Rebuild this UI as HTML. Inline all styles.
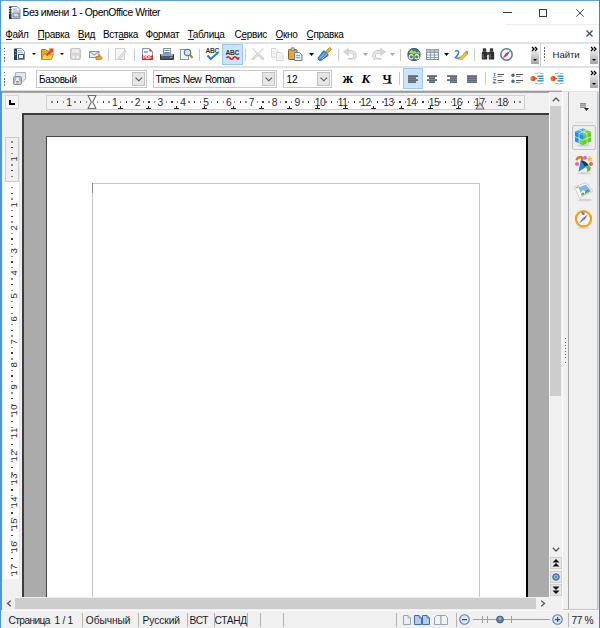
<!DOCTYPE html><html><head><meta charset="utf-8"><style>
html,body{margin:0;padding:0}
body{width:600px;height:628px;position:relative;overflow:hidden;background:#fff;font-family:"Liberation Sans",sans-serif}
.t{position:absolute;white-space:pre;line-height:normal}
.r{position:absolute}
</style></head><body>

<div class="r" style="left:0px;top:0px;width:600px;height:25px;background:#fff;"></div>
<svg class="r" style="left:9px;top:6px" width="12" height="13" viewBox="0 0 12 13"><path d="M1.5 0.5h6.5l3 3v9h-9.5z" fill="#f6f8fa" stroke="#7d8b99"/><rect x="0" y="0.5" width="2.5" height="1.5" fill="#1e2e40"/><rect x="0" y="3" width="2.5" height="1.5" fill="#1e2e40"/><rect x="0" y="5.5" width="2.5" height="1.5" fill="#1e2e40"/><rect x="0" y="7.5" width="2.5" height="5.5" fill="#1e2e40"/><rect x="4" y="2.5" width="4" height="1" fill="#9aaab8"/><rect x="4" y="4.5" width="6" height="1" fill="#9aaab8"/><rect x="4" y="7" width="6" height="4" fill="#cfdceb" stroke="#4a6080" stroke-width="0.8"/></svg>
<div class="t" style="left:22.5px;top:7px;font-size:10.4px;color:#000;letter-spacing:-0.43px;font-weight:400;">Без имени 1 - OpenOffice Writer</div>
<div class="r" style="left:503px;top:12px;width:9px;height:1px;background:#3a3a3a;"></div>
<div class="r" style="left:539px;top:9px;width:6px;height:6px;border:1px solid #3a3a3a"></div>
<svg class="r" style="left:576px;top:9px" width="8" height="8" viewBox="0 0 8 8"><path d="M0.3 0.3L7.7 7.7M7.7 0.3L0.3 7.7" stroke="#333" stroke-width="0.9"/></svg>
<div class="r" style="left:505px;top:24px;width:94px;height:1px;background:#ececec;"></div>
<div class="t" style="left:5.2px;top:28.5px;font-size:10px;color:#000;letter-spacing:-0.3px;font-weight:400;">Файл</div>
<div class="t" style="left:37.5px;top:28.5px;font-size:10px;color:#000;letter-spacing:-0.3px;font-weight:400;">Правка</div>
<div class="t" style="left:77.8px;top:28.5px;font-size:10px;color:#000;letter-spacing:-0.3px;font-weight:400;">Вид</div>
<div class="t" style="left:103px;top:28.5px;font-size:10px;color:#000;letter-spacing:-0.3px;font-weight:400;">Вставка</div>
<div class="t" style="left:145.5px;top:28.5px;font-size:10px;color:#000;letter-spacing:-0.3px;font-weight:400;">Формат</div>
<div class="t" style="left:187.5px;top:28.5px;font-size:10px;color:#000;letter-spacing:-0.3px;font-weight:400;">Таблица</div>
<div class="t" style="left:234.5px;top:28.5px;font-size:10px;color:#000;letter-spacing:-0.3px;font-weight:400;">Сервис</div>
<div class="t" style="left:275.5px;top:28.5px;font-size:10px;color:#000;letter-spacing:-0.3px;font-weight:400;">Окно</div>
<div class="t" style="left:306.5px;top:28.5px;font-size:10px;color:#000;letter-spacing:-0.3px;font-weight:400;">Справка</div>
<div class="r" style="left:6px;top:39px;width:6px;height:1px;background:#2a2a2a;"></div>
<div class="r" style="left:38px;top:39px;width:6px;height:1px;background:#2a2a2a;"></div>
<div class="r" style="left:78.5px;top:39px;width:6px;height:1px;background:#2a2a2a;"></div>
<div class="r" style="left:119px;top:39px;width:5px;height:1px;background:#2a2a2a;"></div>
<div class="r" style="left:153.5px;top:39px;width:5px;height:1px;background:#2a2a2a;"></div>
<div class="r" style="left:188px;top:39px;width:6px;height:1px;background:#2a2a2a;"></div>
<div class="r" style="left:241px;top:39px;width:5px;height:1px;background:#2a2a2a;"></div>
<div class="r" style="left:276px;top:39px;width:7px;height:1px;background:#2a2a2a;"></div>
<div class="r" style="left:307px;top:39px;width:6px;height:1px;background:#2a2a2a;"></div>
<svg class="r" style="left:586px;top:30px" width="7" height="7" viewBox="0 0 7 7"><path d="M0.5 0.5L6.5 6.5M6.5 0.5L0.5 6.5" stroke="#3e5468" stroke-width="1.4"/></svg>
<div class="r" style="left:0px;top:42px;width:599px;height:1.6px;background:#e2e2e2;"></div>
<div class="r" style="left:0px;top:66px;width:599px;height:1.6px;background:#e2e2e2;"></div>
<div class="r" style="left:0px;top:90px;width:562px;height:1px;background:#dcdcdc;"></div>
<div class="r" style="left:0px;top:91px;width:562px;height:1.6px;background:#9c9c9c;"></div>
<div class="r" style="left:562px;top:91px;width:37px;height:1px;background:#e4e4e4;"></div>
<div class="r" style="left:3.8px;top:47.6px;width:1.5px;height:1.5px;background:#6a6a6a;"></div>
<div class="r" style="left:3.8px;top:50.75px;width:1.5px;height:1.5px;background:#6a6a6a;"></div>
<div class="r" style="left:3.8px;top:53.9px;width:1.5px;height:1.5px;background:#6a6a6a;"></div>
<div class="r" style="left:3.8px;top:57.05px;width:1.5px;height:1.5px;background:#6a6a6a;"></div>
<div class="r" style="left:3.8px;top:60.2px;width:1.5px;height:1.5px;background:#6a6a6a;"></div>
<div class="r" style="left:3.8px;top:71.7px;width:1.5px;height:1.5px;background:#6a6a6a;"></div>
<div class="r" style="left:3.8px;top:74.85000000000001px;width:1.5px;height:1.5px;background:#6a6a6a;"></div>
<div class="r" style="left:3.8px;top:78.0px;width:1.5px;height:1.5px;background:#6a6a6a;"></div>
<div class="r" style="left:3.8px;top:81.15px;width:1.5px;height:1.5px;background:#6a6a6a;"></div>
<div class="r" style="left:3.8px;top:84.3px;width:1.5px;height:1.5px;background:#6a6a6a;"></div>
<svg class="r" style="left:14px;top:48px" width="11" height="12" viewBox="0 0 11 12"><path d="M0.5 0.5h7l3 3v8h-10z" fill="#eef3f8" stroke="#8494a5"/><rect x="4" y="2" width="3.5" height="1" fill="#9bbbd8"/><rect x="4" y="4" width="5" height="1" fill="#9bbbd8"/><rect x="0" y="1" width="3" height="11" fill="#2a3f58"/><rect x="1" y="3" width="1" height="1" fill="#8aa"/><rect x="1" y="6" width="1" height="1" fill="#8aa"/><rect x="4.5" y="6.5" width="5" height="4" fill="#fff" stroke="#3a5676"/></svg>
<svg class="r" style="left:31.5px;top:53px" width="4" height="2" viewBox="0 0 4 2"><path d="M0 0h4l-2 2z" fill="#000"/></svg>
<svg class="r" style="left:41px;top:48px" width="13" height="12" viewBox="0 0 13 12"><path d="M0.5 1.5h4l1.5 1.5h4v8.5h-9.5z" fill="#eaa82e" stroke="#b8780f"/><path d="M0.5 11.5l2-5.5h10l-2 5.5z" fill="#fcd24a" stroke="#c08818" stroke-width="0.9"/><path d="M5.5 7.5l5-5" stroke="#e0461c" stroke-width="2.2"/><path d="M7.5 0.5h5v5z" fill="#e0461c"/></svg>
<svg class="r" style="left:59.5px;top:53px" width="4" height="2" viewBox="0 0 4 2"><path d="M0 0h4l-2 2z" fill="#000"/></svg>
<svg class="r" style="left:70px;top:48px" width="11" height="12" viewBox="0 0 11 12"><rect x="0.5" y="0.5" width="10" height="11" rx="1.5" fill="#d4d4d4" stroke="#c4c4c4"/><rect x="2" y="1" width="7" height="4" fill="#ececec"/><rect x="2.5" y="7.5" width="2" height="3" fill="#f4f4f4"/><rect x="6.5" y="7.5" width="2" height="3" fill="#f4f4f4"/></svg>
<svg class="r" style="left:88px;top:50px" width="15" height="10" viewBox="0 0 15 10"><rect x="1.5" y="1.5" width="9.5" height="6" fill="#e6ebf1" stroke="#8494a6"/><path d="M1.5 1.5l4.75 3.5 4.75-3.5" stroke="#8494a6" fill="none"/><path d="M8 6.5h3v-2l3.5 3.5-3.5 3.5v-2h-3z" fill="#f0a020" stroke="#b8700a" stroke-width="0.7"/></svg>
<div class="r" style="left:108px;top:49px;width:1px;height:12px;background:#c8c8c8;"></div>
<svg class="r" style="left:115px;top:48px" width="12" height="12" viewBox="0 0 12 12"><rect x="0.5" y="0.5" width="9" height="11" fill="#f6f6f6" stroke="#d0d0d0"/><path d="M4 9l6-7 1.5 1.5-6 7-2 .5z" fill="#e6e6e6" stroke="#c8c8c8" stroke-width="0.8"/></svg>
<div class="r" style="left:134px;top:49px;width:1px;height:12px;background:#c8c8c8;"></div>
<svg class="r" style="left:142px;top:48px" width="11" height="12" viewBox="0 0 11 12"><path d="M0.5 0.5h7l3 3v8h-10z" fill="#f2f5f8" stroke="#8a97a5"/><rect x="2" y="3" width="4" height="2" fill="#9ab8d6"/><path d="M7.5 0.5l3 3h-3z" fill="#d8262c"/><rect x="0" y="7" width="11" height="5" fill="#d9262c"/><text x="5.5" y="11.3" font-size="4.6" font-family="Liberation Sans" font-weight="700" text-anchor="middle" fill="#fff">PDF</text></svg>
<svg class="r" style="left:160px;top:48px" width="14" height="12" viewBox="0 0 14 12"><rect x="3.5" y="0.5" width="7" height="5" fill="#fff" stroke="#8192a3"/><rect x="4.5" y="2" width="5" height="1" fill="#5d8fc4"/><rect x="4.5" y="4" width="5" height="1" fill="#5d8fc4"/><path d="M0.5 6.5h13v5h-13z" fill="#505a63" stroke="#30363c"/><rect x="1" y="6" width="12" height="2" fill="#9aa3ab"/><rect x="10" y="9" width="2" height="1" fill="#6fcf4a"/></svg>
<svg class="r" style="left:180px;top:48px" width="13" height="12" viewBox="0 0 13 12"><rect x="0.5" y="1.5" width="8" height="10" fill="#f3f6f9" stroke="#8796a5"/><circle cx="7.5" cy="4.5" r="3.2" fill="#cfe3f3" stroke="#4d6f8e" stroke-width="1.1"/><path d="M9.8 6.8l2.8 3" stroke="#b07a20" stroke-width="2"/></svg>
<div class="r" style="left:199px;top:49px;width:1px;height:12px;background:#c8c8c8;"></div>
<svg class="r" style="left:205px;top:47px" width="15" height="14" viewBox="0 0 15 14"><text x="7.3" y="6" font-size="6.6" font-family="Liberation Sans" font-weight="700" text-anchor="middle" fill="#27384a" letter-spacing="-0.3">ABC</text><path d="M2.5 8.5l3.2 3.5 7.5-6.5" stroke="#2f7fd0" stroke-width="2.1" fill="none"/></svg>
<div class="r" style="left:222px;top:44px;width:19px;height:19px;background:#cce4f7;border:1px solid #99c9ef"></div>
<svg class="r" style="left:225px;top:49px" width="15" height="11" viewBox="0 0 15 11"><text x="7.3" y="5.8" font-size="6.6" font-family="Liberation Sans" font-weight="700" text-anchor="middle" fill="#27384a" letter-spacing="-0.3">ABC</text><path d="M1.5 9q1.7-2.5 3.4 0t3.4 0 3.4 0 2-0.8" stroke="#e0201a" stroke-width="1.7" fill="none"/></svg>
<div class="r" style="left:245px;top:49px;width:1px;height:12px;background:#c8c8c8;"></div>
<svg class="r" style="left:251px;top:48px" width="14" height="12" viewBox="0 0 14 12"><path d="M1.5 0.5L7 6M12.5 0.5L7 6" stroke="#d8d8d8" stroke-width="1.4"/><path d="M7 6L2 11M7 6L12 11" stroke="#cfcfcf" stroke-width="2.6" stroke-linecap="round"/><path d="M7 6L2 11M7 6L12 11" stroke="#e6e6e6" stroke-width="1"/></svg>
<svg class="r" style="left:271px;top:48px" width="13" height="13" viewBox="0 0 13 13"><path d="M0.5 0.5h4.5l2 2v6.5h-6.5z" fill="#f6f6f6" stroke="#d6d6d6"/><path d="M5.5 4.5h4.5l2 2v6h-6.5z" fill="#f6f6f6" stroke="#d6d6d6"/><path d="M2 3.5h3M2 5.5h3M7 8h3M7 10h3" stroke="#e2e2e2" stroke-width="0.8"/></svg>
<svg class="r" style="left:288px;top:47px" width="15" height="14" viewBox="0 0 15 14"><rect x="0.5" y="2.5" width="8.5" height="10" rx="0.8" fill="#e8a82a" stroke="#8a5e14"/><path d="M3 3.5v-1.5q0-1.5 1.7-1.5t1.7 1.5v1.5z" fill="#b8c0c8" stroke="#6d7884" stroke-width="0.8"/><path d="M6.5 5.5h5l2.5 2.5v5.5h-7.5z" fill="#dfeaf5" stroke="#6f8194"/><path d="M8 8.5h4M8 10.5h4" stroke="#7aa0c8" stroke-width="0.9"/></svg>
<svg class="r" style="left:309px;top:53px" width="5" height="3" viewBox="0 0 5 3"><path d="M0 0h5l-2.5 3z" fill="#000"/></svg>
<svg class="r" style="left:317px;top:47px" width="15" height="14" viewBox="0 0 15 14"><path d="M1.2 10.8L6.2 4.2Q7 3.4 7.8 4.2L10.8 7.2Q11.6 8 10.8 8.8L4.2 13.2Q2.6 14 1.6 13Q0.6 12 1.2 10.8z" fill="#4a8fe0" stroke="#1f58a6" stroke-width="0.9"/><path d="M3 11l4.5-5M5 12.2l4.5-5" stroke="#a8d0f4" stroke-width="0.8"/><path d="M8.6 4.2l4.2-3.8 1.8 1.8-3.8 4.2z" fill="#e8b52e" stroke="#a37712" stroke-width="0.7"/></svg>
<div class="r" style="left:338px;top:49px;width:1px;height:12px;background:#c8c8c8;"></div>
<svg class="r" style="left:343px;top:48px" width="14" height="12" viewBox="0 0 14 12"><path d="M4.5 3.8h3.5a4 4 0 0 1 0 8h-3" stroke="#c9c9c9" stroke-width="3.4" fill="none"/><path d="M4.5 3.8h3.5a4 4 0 0 1 0 8h-3" stroke="#e9e9e9" stroke-width="1.8" fill="none"/><path d="M0.3 3.8l5-3.6v7.2z" fill="#d8d8d8" stroke="#c6c6c6" stroke-width="0.6"/></svg>
<svg class="r" style="left:363px;top:53px" width="5" height="3" viewBox="0 0 5 3"><path d="M0 0h5l-2.5 3z" fill="#a8a8a8"/></svg>
<svg class="r" style="left:372px;top:48px" width="14" height="12" viewBox="0 0 14 12"><path d="M9.5 3.8h-3.5a4 4 0 0 0 0 8h3" stroke="#c9c9c9" stroke-width="3.4" fill="none"/><path d="M9.5 3.8h-3.5a4 4 0 0 0 0 8h3" stroke="#e9e9e9" stroke-width="1.8" fill="none"/><path d="M13.7 3.8l-5-3.6v7.2z" fill="#d8d8d8" stroke="#c6c6c6" stroke-width="0.6"/></svg>
<svg class="r" style="left:390px;top:53px" width="5" height="3" viewBox="0 0 5 3"><path d="M0 0h5l-2.5 3z" fill="#a8a8a8"/></svg>
<div class="r" style="left:400px;top:49px;width:1px;height:12px;background:#c8c8c8;"></div>
<svg class="r" style="left:407px;top:48px" width="14" height="13" viewBox="0 0 14 13"><circle cx="7" cy="6.5" r="6.2" fill="#2f6fb8" stroke="#1d4a80" stroke-width="0.8"/><path d="M2 5q1-3 3-3.5l1 2 2-1 1 2 3-1q0.5 1 0.5 2.5l-3 .5-2-1-2 1z" fill="#b8d832"/><circle cx="4.3" cy="8.8" r="2.3" fill="#3a9a3a" stroke="#f2f2f2" stroke-width="1.3"/><circle cx="9.7" cy="8.8" r="2.3" fill="#3a9a3a" stroke="#f2f2f2" stroke-width="1.3"/><circle cx="4.3" cy="8.8" r="3.2" fill="none" stroke="#333" stroke-width="0.5"/><circle cx="9.7" cy="8.8" r="3.2" fill="none" stroke="#333" stroke-width="0.5"/></svg>
<svg class="r" style="left:426px;top:49px" width="13" height="11" viewBox="0 0 13 11"><rect x="0.5" y="0.5" width="12" height="10" fill="#f4f7fa" stroke="#7d8a97"/><rect x="0.5" y="0.5" width="12" height="2.5" fill="#b8c2cc"/><path d="M0.5 3.5h12M0.5 6h12M0.5 8.5h12M4.5 0.5v10M8.5 0.5v10" stroke="#8a97a4" stroke-width="0.9"/></svg>
<svg class="r" style="left:444px;top:53px" width="5" height="3" viewBox="0 0 5 3"><path d="M0 0h5l-2.5 3z" fill="#000"/></svg>
<svg class="r" style="left:454px;top:49px" width="14" height="11" viewBox="0 0 14 11"><path d="M1.2 2.5q2-2.2 3.2 0t-3 6q2.5 1.5 5-.5" stroke="#3d82d8" stroke-width="1.5" fill="none"/><path d="M5 9.5l6.5-6.5 2 2-6.5 6.5-3 .8z" fill="#f5c830" stroke="#b08010" stroke-width="0.7"/><path d="M11.5 3l1.3-1.3 2 2-1.3 1.3z" fill="#ee7fa0" stroke="#c05070" stroke-width="0.5"/></svg>
<div class="r" style="left:474px;top:49px;width:1px;height:12px;background:#c8c8c8;"></div>
<svg class="r" style="left:480.5px;top:48px" width="14" height="12" viewBox="0 0 14 12"><path d="M0.8 11.5V5.5Q0.8 3.2 2.6 3.2H4.4Q6.2 3.2 6.2 5.5V11.5z" fill="#2a2a2a"/><path d="M7.8 11.5V5.5Q7.8 3.2 9.6 3.2H11.4Q13.2 3.2 13.2 5.5V11.5z" fill="#2a2a2a"/><rect x="1.8" y="0.3" width="3.4" height="3.2" rx="0.6" fill="#3a3a3a"/><rect x="8.8" y="0.3" width="3.4" height="3.2" rx="0.6" fill="#3a3a3a"/><rect x="5.8" y="4" width="2.4" height="3" fill="#4a4a4a"/><path d="M2.2 6v4.5M9.2 6v4.5" stroke="#8a8a8a" stroke-width="0.8"/><path d="M1 8.5h5M8 8.5h5" stroke="#555" stroke-width="0.5"/></svg>
<svg class="r" style="left:500px;top:48px" width="13" height="13" viewBox="0 0 13 13"><circle cx="6.5" cy="6.5" r="5.7" fill="#f4f6f8" stroke="#66788a" stroke-width="1.5"/><path d="M10.2 2.8L7.6 7.6 5.4 5.4z" fill="#2a6fd6"/><path d="M2.8 10.2L5.4 5.4 7.6 7.6z" fill="#e23030"/></svg>
<svg class="r" style="left:531px;top:46px" width="8" height="18" viewBox="0 0 8 18"><defs><linearGradient id="g53146" x1="0" y1="0" x2="0" y2="1"><stop offset="0" stop-color="#e8e8e8"/><stop offset="1" stop-color="#a4a4a4"/></linearGradient></defs><rect x="0" y="5" width="8" height="13" fill="url(#g53146)"/><path d="M1 1l2 2-2 2M4 1l2 2-2 2" stroke="#000" stroke-width="1.3" fill="none"/><path d="M2 13h4l-2 2z" fill="#000"/></svg>
<div class="r" style="left:540px;top:43px;width:1px;height:23px;background:#c8c8c8;"></div>
<div class="r" style="left:543.8px;top:47.0px;width:1.5px;height:1.5px;background:#6a6a6a;"></div>
<div class="r" style="left:543.8px;top:50.15px;width:1.5px;height:1.5px;background:#6a6a6a;"></div>
<div class="r" style="left:543.8px;top:53.3px;width:1.5px;height:1.5px;background:#6a6a6a;"></div>
<div class="r" style="left:543.8px;top:56.45px;width:1.5px;height:1.5px;background:#6a6a6a;"></div>
<div class="r" style="left:543.8px;top:59.6px;width:1.5px;height:1.5px;background:#6a6a6a;"></div>
<div class="t" style="left:552.5px;top:48.8px;font-size:9.6px;color:#202040;letter-spacing:-0.05px;font-weight:400;">Найти</div>
<svg class="r" style="left:590px;top:46px" width="8" height="18" viewBox="0 0 8 18"><defs><linearGradient id="g59046" x1="0" y1="0" x2="0" y2="1"><stop offset="0" stop-color="#e8e8e8"/><stop offset="1" stop-color="#a4a4a4"/></linearGradient></defs><rect x="0" y="5" width="8" height="13" fill="url(#g59046)"/><path d="M1 1l2 2-2 2M4 1l2 2-2 2" stroke="#000" stroke-width="1.3" fill="none"/><path d="M2 13h4l-2 2z" fill="#000"/></svg>
<svg class="r" style="left:13px;top:72px" width="14" height="13" viewBox="0 0 14 13"><path d="M2.5 0.5h10v6.5l-2.5 2.5h-7.5z" fill="#e6e9ec" stroke="#aab1b8"/><rect x="0.5" y="4.5" width="8" height="8" rx="1.2" fill="#b3b9bf" stroke="#8a9299"/><circle cx="4.5" cy="6.8" r="1.2" fill="#fafafa"/><path d="M2.2 11.5l1.5-3.5h1.6l1.5 3.5" stroke="#fafafa" stroke-width="1.2" fill="none"/><path d="M3 9.5h3" stroke="#50585f" stroke-width="0.6"/></svg>
<div class="r" style="left:36px;top:70px;width:109px;height:16px;background:#fff;border:1px solid #c8c8c8"></div>
<div class="r" style="left:132px;top:72px;width:11px;height:12px;background:#e6e6e6;border:1px solid #c2c2c2"></div>
<svg class="r" style="left:134.5px;top:77px" width="8" height="5" viewBox="0 0 8 5"><path d="M0.6 0.6l3.2 3.2 3.2-3.2" stroke="#555" stroke-width="1.1" fill="none"/></svg>
<div class="t" style="left:39px;top:73.6px;font-size:10px;color:#000;letter-spacing:-0.35px;font-weight:400;word-spacing:1.5px">Базовый</div>
<div class="r" style="left:153px;top:70px;width:122px;height:16px;background:#fff;border:1px solid #c8c8c8"></div>
<div class="r" style="left:262px;top:72px;width:11px;height:12px;background:#e6e6e6;border:1px solid #c2c2c2"></div>
<svg class="r" style="left:264.5px;top:77px" width="8" height="5" viewBox="0 0 8 5"><path d="M0.6 0.6l3.2 3.2 3.2-3.2" stroke="#555" stroke-width="1.1" fill="none"/></svg>
<div class="t" style="left:155.5px;top:73.6px;font-size:10px;color:#000;letter-spacing:-0.6px;font-weight:400;word-spacing:1.5px">Times New Roman</div>
<div class="r" style="left:283px;top:70px;width:47px;height:16px;background:#fff;border:1px solid #c8c8c8"></div>
<div class="r" style="left:317px;top:72px;width:11px;height:12px;background:#e6e6e6;border:1px solid #c2c2c2"></div>
<svg class="r" style="left:319.5px;top:77px" width="8" height="5" viewBox="0 0 8 5"><path d="M0.6 0.6l3.2 3.2 3.2-3.2" stroke="#555" stroke-width="1.1" fill="none"/></svg>
<div class="t" style="left:286.5px;top:73.6px;font-size:10px;color:#000;letter-spacing:0px;font-weight:400;word-spacing:1.5px">12</div>
<div class="t" style="left:342.5px;top:69.5px;font-size:14.5px;color:#000;letter-spacing:0px;font-weight:700;font-family:'Liberation Serif',serif">ж</div>
<div class="t" style="left:361.5px;top:70.5px;font-size:13px;color:#000;letter-spacing:0px;font-weight:700;font-family:'Liberation Serif',serif;font-style:italic">К</div>
<div class="t" style="left:382.5px;top:71.5px;font-size:12.5px;color:#000;letter-spacing:0px;font-weight:700;font-family:'Liberation Serif',serif">Ч</div>
<div class="r" style="left:382.5px;top:83px;width:9.5px;height:1.2px;background:#6a6a6a;"></div>
<div class="r" style="left:399px;top:72px;width:1px;height:13px;background:#c8c8c8;"></div>
<div class="r" style="left:403px;top:68px;width:18px;height:19px;background:#cce4f7;border:1px solid #99c9ef"></div>
<svg class="r" style="left:408px;top:75px" width="10" height="8" viewBox="0 0 10 8"><rect x="0" y="0.2" width="10" height="1.8" fill="#5e6a76"/><rect x="0" y="2.2" width="8" height="1.8" fill="#5e6a76"/><rect x="0" y="4.2" width="10" height="1.8" fill="#5e6a76"/><rect x="0" y="6.2" width="8" height="1.8" fill="#5e6a76"/></svg>
<svg class="r" style="left:427px;top:75px" width="10" height="8" viewBox="0 0 10 8"><rect x="0.0" y="0.2" width="10" height="1.8" fill="#5e6a76"/><rect x="2.0" y="2.2" width="6" height="1.8" fill="#5e6a76"/><rect x="0.0" y="4.2" width="10" height="1.8" fill="#5e6a76"/><rect x="2.0" y="6.2" width="6" height="1.8" fill="#5e6a76"/></svg>
<svg class="r" style="left:447px;top:75px" width="10" height="8" viewBox="0 0 10 8"><rect x="0" y="0.2" width="10" height="1.8" fill="#5e6a76"/><rect x="3" y="2.2" width="7" height="1.8" fill="#5e6a76"/><rect x="0" y="4.2" width="10" height="1.8" fill="#5e6a76"/><rect x="3" y="6.2" width="7" height="1.8" fill="#5e6a76"/></svg>
<svg class="r" style="left:466.5px;top:75px" width="10" height="8" viewBox="0 0 10 8"><rect x="0" y="0.2" width="10" height="1.8" fill="#5e6a76"/><rect x="0" y="2.2" width="10" height="1.8" fill="#5e6a76"/><rect x="0" y="4.2" width="10" height="1.8" fill="#5e6a76"/><rect x="0" y="6.2" width="10" height="1.8" fill="#5e6a76"/></svg>
<div class="r" style="left:485px;top:72px;width:1px;height:13px;background:#c8c8c8;"></div>
<svg class="r" style="left:492px;top:73px" width="13" height="11" viewBox="0 0 13 11"><path d="M1.5 0.5h2M2.5 0.5v2.5M1.5 3h2" stroke="#4a7fb8" stroke-width="0.9"/><path d="M1 6.5h3l-3 3h3" stroke="#4a7fb8" stroke-width="0.9" fill="none"/><rect x="0.5" y="4" width="4" height="1" fill="#9fc0e0"/><rect x="0.5" y="10" width="4" height="1" fill="#9fc0e0"/><rect x="5.5" y="1" width="6.5" height="1" fill="#505050"/><rect x="5.5" y="3" width="4.5" height="1" fill="#8a8a8a"/><rect x="5.5" y="7" width="6.5" height="1" fill="#505050"/><rect x="5.5" y="9" width="4.5" height="1" fill="#8a8a8a"/></svg>
<svg class="r" style="left:511px;top:73px" width="13" height="11" viewBox="0 0 13 11"><circle cx="2" cy="2.2" r="1.7" fill="#46698e"/><circle cx="2" cy="8.2" r="1.7" fill="#46698e"/><rect x="5" y="1" width="7" height="1" fill="#505050"/><rect x="5" y="3" width="4.5" height="1" fill="#8a8a8a"/><rect x="5" y="7" width="7" height="1" fill="#505050"/><rect x="5" y="9" width="4.5" height="1" fill="#8a8a8a"/></svg>
<svg class="r" style="left:529.5px;top:72px" width="15" height="13" viewBox="0 0 15 13"><path d="M5 1.5h3l1-1 1 1h3.5M5 11.5h3l1 1 1-1h3.5" stroke="#909090" stroke-width="0.7" fill="none"/><rect x="7.5" y="3.5" width="6" height="1.4" fill="#2a8ad8"/><rect x="8.5" y="5.8" width="5" height="1.4" fill="#2a8ad8"/><rect x="7.5" y="8.1" width="6" height="1.4" fill="#2a8ad8"/><circle cx="3.2" cy="6.5" r="2.6" fill="#d85018"/><path d="M0.2 6.5l3-2.8v5.6z" fill="#f07838"/><path d="M5.5 6.5h2" stroke="#d85018" stroke-width="1.2"/></svg>
<svg class="r" style="left:549.5px;top:72px" width="15" height="13" viewBox="0 0 15 13"><path d="M5 1.5h3l1-1 1 1h3.5M5 11.5h3l1 1 1-1h3.5" stroke="#909090" stroke-width="0.7" fill="none"/><rect x="7.5" y="3.5" width="6" height="1.4" fill="#2a8ad8"/><rect x="8.5" y="5.8" width="5" height="1.4" fill="#2a8ad8"/><rect x="7.5" y="8.1" width="6" height="1.4" fill="#2a8ad8"/><circle cx="3.2" cy="6.5" r="2.6" fill="#d85018"/><path d="M0.2 6.5l3-2.8v5.6z" fill="#f07838"/><path d="M5.5 6.5h2" stroke="#d85018" stroke-width="1.2"/></svg>
<svg class="r" style="left:590px;top:70px" width="8" height="18" viewBox="0 0 8 18"><defs><linearGradient id="g59070" x1="0" y1="0" x2="0" y2="1"><stop offset="0" stop-color="#e8e8e8"/><stop offset="1" stop-color="#a4a4a4"/></linearGradient></defs><rect x="0" y="5" width="8" height="13" fill="url(#g59070)"/><path d="M1 1l2 2-2 2M4 1l2 2-2 2" stroke="#000" stroke-width="1.3" fill="none"/><path d="M2 13h4l-2 2z" fill="#000"/></svg>
<div class="r" style="left:1px;top:92px;width:567px;height:518px;background:#f0f0f0;"></div>
<div class="r" style="left:1px;top:92px;width:567px;height:1px;background:#a8a8a8;"></div>
<div class="r" style="left:5px;top:95px;width:12px;height:12px;background:#f6f6f6;border:1px solid #d6d6d6"></div>
<div class="r" style="left:9px;top:100px;width:1.6px;height:5px;background:#000;"></div>
<div class="r" style="left:9px;top:103.2px;width:6px;height:1.6px;background:#000;"></div>
<div class="r" style="left:46px;top:95px;width:477px;height:13px;background:#f2f2f2;border:1px solid #d2d2d2"></div>
<div class="r" style="left:92px;top:96px;width:387px;height:13px;background:#fff;"></div>
<div class="r" style="left:51.4px;top:101.4px;width:1.4px;height:1.4px;background:#8a8a8a;"></div>
<div class="r" style="left:57.1px;top:101px;width:1.4px;height:2.2px;background:#3a3a3a;"></div>
<div class="r" style="left:62.8px;top:101.4px;width:1.4px;height:1.4px;background:#8a8a8a;"></div>
<div class="r" style="left:74.2px;top:101.4px;width:1.4px;height:1.4px;background:#8a8a8a;"></div>
<div class="r" style="left:79.9px;top:101px;width:1.4px;height:2.2px;background:#3a3a3a;"></div>
<div class="r" style="left:85.6px;top:101.4px;width:1.4px;height:1.4px;background:#8a8a8a;"></div>
<div class="r" style="left:97.0px;top:101.4px;width:1.4px;height:1.4px;background:#8a8a8a;"></div>
<div class="r" style="left:102.7px;top:101px;width:1.4px;height:2.2px;background:#3a3a3a;"></div>
<div class="r" style="left:108.4px;top:101.4px;width:1.4px;height:1.4px;background:#8a8a8a;"></div>
<div class="r" style="left:119.8px;top:101.4px;width:1.4px;height:1.4px;background:#8a8a8a;"></div>
<div class="r" style="left:125.5px;top:101px;width:1.4px;height:2.2px;background:#3a3a3a;"></div>
<div class="r" style="left:131.2px;top:101.4px;width:1.4px;height:1.4px;background:#8a8a8a;"></div>
<div class="r" style="left:142.6px;top:101.4px;width:1.4px;height:1.4px;background:#8a8a8a;"></div>
<div class="r" style="left:148.4px;top:101px;width:1.4px;height:2.2px;background:#3a3a3a;"></div>
<div class="r" style="left:154.1px;top:101.4px;width:1.4px;height:1.4px;background:#8a8a8a;"></div>
<div class="r" style="left:165.5px;top:101.4px;width:1.4px;height:1.4px;background:#8a8a8a;"></div>
<div class="r" style="left:171.2px;top:101px;width:1.4px;height:2.2px;background:#3a3a3a;"></div>
<div class="r" style="left:176.9px;top:101.4px;width:1.4px;height:1.4px;background:#8a8a8a;"></div>
<div class="r" style="left:188.3px;top:101.4px;width:1.4px;height:1.4px;background:#8a8a8a;"></div>
<div class="r" style="left:194.0px;top:101px;width:1.4px;height:2.2px;background:#3a3a3a;"></div>
<div class="r" style="left:199.7px;top:101.4px;width:1.4px;height:1.4px;background:#8a8a8a;"></div>
<div class="r" style="left:211.1px;top:101.4px;width:1.4px;height:1.4px;background:#8a8a8a;"></div>
<div class="r" style="left:216.8px;top:101px;width:1.4px;height:2.2px;background:#3a3a3a;"></div>
<div class="r" style="left:222.5px;top:101.4px;width:1.4px;height:1.4px;background:#8a8a8a;"></div>
<div class="r" style="left:233.9px;top:101.4px;width:1.4px;height:1.4px;background:#8a8a8a;"></div>
<div class="r" style="left:239.6px;top:101px;width:1.4px;height:2.2px;background:#3a3a3a;"></div>
<div class="r" style="left:245.3px;top:101.4px;width:1.4px;height:1.4px;background:#8a8a8a;"></div>
<div class="r" style="left:256.7px;top:101.4px;width:1.4px;height:1.4px;background:#8a8a8a;"></div>
<div class="r" style="left:262.4px;top:101px;width:1.4px;height:2.2px;background:#3a3a3a;"></div>
<div class="r" style="left:268.2px;top:101.4px;width:1.4px;height:1.4px;background:#8a8a8a;"></div>
<div class="r" style="left:279.6px;top:101.4px;width:1.4px;height:1.4px;background:#8a8a8a;"></div>
<div class="r" style="left:285.3px;top:101px;width:1.4px;height:2.2px;background:#3a3a3a;"></div>
<div class="r" style="left:291.0px;top:101.4px;width:1.4px;height:1.4px;background:#8a8a8a;"></div>
<div class="r" style="left:302.4px;top:101.4px;width:1.4px;height:1.4px;background:#8a8a8a;"></div>
<div class="r" style="left:308.1px;top:101px;width:1.4px;height:2.2px;background:#3a3a3a;"></div>
<div class="r" style="left:313.8px;top:101.4px;width:1.4px;height:1.4px;background:#8a8a8a;"></div>
<div class="r" style="left:325.2px;top:101.4px;width:1.4px;height:1.4px;background:#8a8a8a;"></div>
<div class="r" style="left:330.9px;top:101px;width:1.4px;height:2.2px;background:#3a3a3a;"></div>
<div class="r" style="left:336.6px;top:101.4px;width:1.4px;height:1.4px;background:#8a8a8a;"></div>
<div class="r" style="left:348.0px;top:101.4px;width:1.4px;height:1.4px;background:#8a8a8a;"></div>
<div class="r" style="left:353.7px;top:101px;width:1.4px;height:2.2px;background:#3a3a3a;"></div>
<div class="r" style="left:359.4px;top:101.4px;width:1.4px;height:1.4px;background:#8a8a8a;"></div>
<div class="r" style="left:370.8px;top:101.4px;width:1.4px;height:1.4px;background:#8a8a8a;"></div>
<div class="r" style="left:376.6px;top:101px;width:1.4px;height:2.2px;background:#3a3a3a;"></div>
<div class="r" style="left:382.3px;top:101.4px;width:1.4px;height:1.4px;background:#8a8a8a;"></div>
<div class="r" style="left:393.7px;top:101.4px;width:1.4px;height:1.4px;background:#8a8a8a;"></div>
<div class="r" style="left:399.4px;top:101px;width:1.4px;height:2.2px;background:#3a3a3a;"></div>
<div class="r" style="left:405.1px;top:101.4px;width:1.4px;height:1.4px;background:#8a8a8a;"></div>
<div class="r" style="left:416.5px;top:101.4px;width:1.4px;height:1.4px;background:#8a8a8a;"></div>
<div class="r" style="left:422.2px;top:101px;width:1.4px;height:2.2px;background:#3a3a3a;"></div>
<div class="r" style="left:427.9px;top:101.4px;width:1.4px;height:1.4px;background:#8a8a8a;"></div>
<div class="r" style="left:439.3px;top:101.4px;width:1.4px;height:1.4px;background:#8a8a8a;"></div>
<div class="r" style="left:445.0px;top:101px;width:1.4px;height:2.2px;background:#3a3a3a;"></div>
<div class="r" style="left:450.7px;top:101.4px;width:1.4px;height:1.4px;background:#8a8a8a;"></div>
<div class="r" style="left:462.1px;top:101.4px;width:1.4px;height:1.4px;background:#8a8a8a;"></div>
<div class="r" style="left:467.8px;top:101px;width:1.4px;height:2.2px;background:#3a3a3a;"></div>
<div class="r" style="left:473.5px;top:101.4px;width:1.4px;height:1.4px;background:#8a8a8a;"></div>
<div class="r" style="left:484.9px;top:101.4px;width:1.4px;height:1.4px;background:#8a8a8a;"></div>
<div class="r" style="left:490.7px;top:101px;width:1.4px;height:2.2px;background:#3a3a3a;"></div>
<div class="r" style="left:496.4px;top:101.4px;width:1.4px;height:1.4px;background:#8a8a8a;"></div>
<div class="r" style="left:507.8px;top:101.4px;width:1.4px;height:1.4px;background:#8a8a8a;"></div>
<div class="r" style="left:513.5px;top:101px;width:1.4px;height:2.2px;background:#3a3a3a;"></div>
<div class="r" style="left:519.2px;top:101.4px;width:1.4px;height:1.4px;background:#8a8a8a;"></div>
<div class="t" style="left:66.2px;top:96.5px;width:5.3px;text-align:center;font-size:10.3px;letter-spacing:-0.5px;color:#2a2a3a">1</div>
<div class="t" style="left:111.9px;top:96.5px;width:5.3px;text-align:center;font-size:10.3px;letter-spacing:-0.5px;color:#2a2a3a">1</div>
<div class="t" style="left:134.7px;top:96.5px;width:5.3px;text-align:center;font-size:10.3px;letter-spacing:-0.5px;color:#2a2a3a">2</div>
<div class="t" style="left:157.5px;top:96.5px;width:5.3px;text-align:center;font-size:10.3px;letter-spacing:-0.5px;color:#2a2a3a">3</div>
<div class="t" style="left:180.3px;top:96.5px;width:5.3px;text-align:center;font-size:10.3px;letter-spacing:-0.5px;color:#2a2a3a">4</div>
<div class="t" style="left:203.1px;top:96.5px;width:5.3px;text-align:center;font-size:10.3px;letter-spacing:-0.5px;color:#2a2a3a">5</div>
<div class="t" style="left:226.0px;top:96.5px;width:5.3px;text-align:center;font-size:10.3px;letter-spacing:-0.5px;color:#2a2a3a">6</div>
<div class="t" style="left:248.8px;top:96.5px;width:5.3px;text-align:center;font-size:10.3px;letter-spacing:-0.5px;color:#2a2a3a">7</div>
<div class="t" style="left:271.6px;top:96.5px;width:5.3px;text-align:center;font-size:10.3px;letter-spacing:-0.5px;color:#2a2a3a">8</div>
<div class="t" style="left:294.4px;top:96.5px;width:5.3px;text-align:center;font-size:10.3px;letter-spacing:-0.5px;color:#2a2a3a">9</div>
<div class="t" style="left:314.6px;top:96.5px;width:10.6px;text-align:center;font-size:10.3px;letter-spacing:-0.5px;color:#2a2a3a">10</div>
<div class="t" style="left:337.4px;top:96.5px;width:10.6px;text-align:center;font-size:10.3px;letter-spacing:-0.5px;color:#2a2a3a">11</div>
<div class="t" style="left:360.2px;top:96.5px;width:10.6px;text-align:center;font-size:10.3px;letter-spacing:-0.5px;color:#2a2a3a">12</div>
<div class="t" style="left:383.1px;top:96.5px;width:10.6px;text-align:center;font-size:10.3px;letter-spacing:-0.5px;color:#2a2a3a">13</div>
<div class="t" style="left:405.9px;top:96.5px;width:10.6px;text-align:center;font-size:10.3px;letter-spacing:-0.5px;color:#2a2a3a">14</div>
<div class="t" style="left:428.7px;top:96.5px;width:10.6px;text-align:center;font-size:10.3px;letter-spacing:-0.5px;color:#2a2a3a">15</div>
<div class="t" style="left:451.5px;top:96.5px;width:10.6px;text-align:center;font-size:10.3px;letter-spacing:-0.5px;color:#2a2a3a">16</div>
<div class="t" style="left:474.3px;top:96.5px;width:10.6px;text-align:center;font-size:10.3px;letter-spacing:-0.5px;color:#2a2a3a">17</div>
<div class="t" style="left:497.2px;top:96.5px;width:10.6px;text-align:center;font-size:10.3px;letter-spacing:-0.5px;color:#2a2a3a">18</div>
<div class="r" style="left:119.9px;top:105.5px;width:1px;height:3px;background:#222;"></div>
<div class="r" style="left:117.9px;top:107.7px;width:5px;height:1.2px;background:#222;"></div>
<div class="r" style="left:148.1px;top:105.5px;width:1px;height:3px;background:#222;"></div>
<div class="r" style="left:146.1px;top:107.7px;width:5px;height:1.2px;background:#222;"></div>
<div class="r" style="left:176.2px;top:105.5px;width:1px;height:3px;background:#222;"></div>
<div class="r" style="left:174.2px;top:107.7px;width:5px;height:1.2px;background:#222;"></div>
<div class="r" style="left:204.3px;top:105.5px;width:1px;height:3px;background:#222;"></div>
<div class="r" style="left:202.3px;top:107.7px;width:5px;height:1.2px;background:#222;"></div>
<div class="r" style="left:232.5px;top:105.5px;width:1px;height:3px;background:#222;"></div>
<div class="r" style="left:230.5px;top:107.7px;width:5px;height:1.2px;background:#222;"></div>
<div class="r" style="left:260.6px;top:105.5px;width:1px;height:3px;background:#222;"></div>
<div class="r" style="left:258.6px;top:107.7px;width:5px;height:1.2px;background:#222;"></div>
<div class="r" style="left:288.8px;top:105.5px;width:1px;height:3px;background:#222;"></div>
<div class="r" style="left:286.8px;top:107.7px;width:5px;height:1.2px;background:#222;"></div>
<div class="r" style="left:316.9px;top:105.5px;width:1px;height:3px;background:#222;"></div>
<div class="r" style="left:314.9px;top:107.7px;width:5px;height:1.2px;background:#222;"></div>
<div class="r" style="left:345.1px;top:105.5px;width:1px;height:3px;background:#222;"></div>
<div class="r" style="left:343.1px;top:107.7px;width:5px;height:1.2px;background:#222;"></div>
<div class="r" style="left:373.2px;top:105.5px;width:1px;height:3px;background:#222;"></div>
<div class="r" style="left:371.2px;top:107.7px;width:5px;height:1.2px;background:#222;"></div>
<div class="r" style="left:401.4px;top:105.5px;width:1px;height:3px;background:#222;"></div>
<div class="r" style="left:399.4px;top:107.7px;width:5px;height:1.2px;background:#222;"></div>
<div class="r" style="left:429.5px;top:105.5px;width:1px;height:3px;background:#222;"></div>
<div class="r" style="left:427.5px;top:107.7px;width:5px;height:1.2px;background:#222;"></div>
<div class="r" style="left:457.7px;top:105.5px;width:1px;height:3px;background:#222;"></div>
<div class="r" style="left:455.7px;top:107.7px;width:5px;height:1.2px;background:#222;"></div>
<svg class="r" style="left:87px;top:94px" width="10" height="16" viewBox="0 0 10 16"><path d="M1 1.5h8l-3.3 6.5 3.3 6.5h-8l3.3-6.5z" fill="#f6f6f6" stroke="#6e6e6e" stroke-width="1.1" stroke-linejoin="round"/></svg>
<div class="r" style="left:479px;top:96px;width:1px;height:13px;background:#d2d2d2;"></div>
<svg class="r" style="left:475px;top:102px" width="10" height="8" viewBox="0 0 10 8"><path d="M1 7h8l-4 -6z" fill="#e6e6e6" stroke="#6e6e6e" stroke-width="1.1" stroke-linejoin="round"/></svg>
<div class="r" style="left:3px;top:137px;width:2px;height:442px;background:#f6f6f6;"></div>
<div class="r" style="left:5px;top:137px;width:14px;height:442px;background:#fff;"></div>
<div class="r" style="left:19px;top:137px;width:1px;height:442px;background:#e6e6e6;"></div>
<div class="r" style="left:5px;top:137px;width:12px;height:43px;background:#f0f0f0;border:1px solid #cbcbcb"></div>
<div class="r" style="left:11.3px;top:141.4px;width:1.4px;height:1.4px;background:#8a8a8a;"></div>
<div class="r" style="left:10.9px;top:147.1px;width:2.2px;height:1.4px;background:#3a3a3a;"></div>
<div class="r" style="left:11.3px;top:152.8px;width:1.4px;height:1.4px;background:#8a8a8a;"></div>
<div class="t" style="left:7.9px;top:147.2px;width:12.4px;height:24px;line-height:24px;text-align:center;font-size:19.2px;letter-spacing:1px;text-indent:1px;color:#2a2a3a;transform:rotate(-90deg) scale(0.5);transform-origin:6.2px 12px">1</div>
<div class="r" style="left:11.3px;top:164.2px;width:1.4px;height:1.4px;background:#8a8a8a;"></div>
<div class="r" style="left:10.9px;top:169.9px;width:2.2px;height:1.4px;background:#3a3a3a;"></div>
<div class="r" style="left:11.3px;top:175.6px;width:1.4px;height:1.4px;background:#8a8a8a;"></div>
<div class="r" style="left:11.3px;top:187.0px;width:1.4px;height:1.4px;background:#8a8a8a;"></div>
<div class="r" style="left:10.9px;top:192.7px;width:2.2px;height:1.4px;background:#3a3a3a;"></div>
<div class="r" style="left:11.3px;top:198.4px;width:1.4px;height:1.4px;background:#8a8a8a;"></div>
<div class="t" style="left:7.9px;top:192.8px;width:12.4px;height:24px;line-height:24px;text-align:center;font-size:19.2px;letter-spacing:1px;text-indent:1px;color:#2a2a3a;transform:rotate(-90deg) scale(0.5);transform-origin:6.2px 12px">1</div>
<div class="r" style="left:11.3px;top:209.8px;width:1.4px;height:1.4px;background:#8a8a8a;"></div>
<div class="r" style="left:10.9px;top:215.5px;width:2.2px;height:1.4px;background:#3a3a3a;"></div>
<div class="r" style="left:11.3px;top:221.2px;width:1.4px;height:1.4px;background:#8a8a8a;"></div>
<div class="t" style="left:7.9px;top:215.6px;width:12.4px;height:24px;line-height:24px;text-align:center;font-size:19.2px;letter-spacing:1px;text-indent:1px;color:#2a2a3a;transform:rotate(-90deg) scale(0.5);transform-origin:6.2px 12px">2</div>
<div class="r" style="left:11.3px;top:232.6px;width:1.4px;height:1.4px;background:#8a8a8a;"></div>
<div class="r" style="left:10.9px;top:238.4px;width:2.2px;height:1.4px;background:#3a3a3a;"></div>
<div class="r" style="left:11.3px;top:244.1px;width:1.4px;height:1.4px;background:#8a8a8a;"></div>
<div class="t" style="left:7.9px;top:238.5px;width:12.4px;height:24px;line-height:24px;text-align:center;font-size:19.2px;letter-spacing:1px;text-indent:1px;color:#2a2a3a;transform:rotate(-90deg) scale(0.5);transform-origin:6.2px 12px">3</div>
<div class="r" style="left:11.3px;top:255.5px;width:1.4px;height:1.4px;background:#8a8a8a;"></div>
<div class="r" style="left:10.9px;top:261.2px;width:2.2px;height:1.4px;background:#3a3a3a;"></div>
<div class="r" style="left:11.3px;top:266.9px;width:1.4px;height:1.4px;background:#8a8a8a;"></div>
<div class="t" style="left:7.9px;top:261.3px;width:12.4px;height:24px;line-height:24px;text-align:center;font-size:19.2px;letter-spacing:1px;text-indent:1px;color:#2a2a3a;transform:rotate(-90deg) scale(0.5);transform-origin:6.2px 12px">4</div>
<div class="r" style="left:11.3px;top:278.3px;width:1.4px;height:1.4px;background:#8a8a8a;"></div>
<div class="r" style="left:10.9px;top:284.0px;width:2.2px;height:1.4px;background:#3a3a3a;"></div>
<div class="r" style="left:11.3px;top:289.7px;width:1.4px;height:1.4px;background:#8a8a8a;"></div>
<div class="t" style="left:7.9px;top:284.1px;width:12.4px;height:24px;line-height:24px;text-align:center;font-size:19.2px;letter-spacing:1px;text-indent:1px;color:#2a2a3a;transform:rotate(-90deg) scale(0.5);transform-origin:6.2px 12px">5</div>
<div class="r" style="left:11.3px;top:301.1px;width:1.4px;height:1.4px;background:#8a8a8a;"></div>
<div class="r" style="left:10.9px;top:306.8px;width:2.2px;height:1.4px;background:#3a3a3a;"></div>
<div class="r" style="left:11.3px;top:312.5px;width:1.4px;height:1.4px;background:#8a8a8a;"></div>
<div class="t" style="left:7.9px;top:306.9px;width:12.4px;height:24px;line-height:24px;text-align:center;font-size:19.2px;letter-spacing:1px;text-indent:1px;color:#2a2a3a;transform:rotate(-90deg) scale(0.5);transform-origin:6.2px 12px">6</div>
<div class="r" style="left:11.3px;top:323.9px;width:1.4px;height:1.4px;background:#8a8a8a;"></div>
<div class="r" style="left:10.9px;top:329.6px;width:2.2px;height:1.4px;background:#3a3a3a;"></div>
<div class="r" style="left:11.3px;top:335.3px;width:1.4px;height:1.4px;background:#8a8a8a;"></div>
<div class="t" style="left:7.9px;top:329.7px;width:12.4px;height:24px;line-height:24px;text-align:center;font-size:19.2px;letter-spacing:1px;text-indent:1px;color:#2a2a3a;transform:rotate(-90deg) scale(0.5);transform-origin:6.2px 12px">7</div>
<div class="r" style="left:11.3px;top:346.7px;width:1.4px;height:1.4px;background:#8a8a8a;"></div>
<div class="r" style="left:10.9px;top:352.4px;width:2.2px;height:1.4px;background:#3a3a3a;"></div>
<div class="r" style="left:11.3px;top:358.2px;width:1.4px;height:1.4px;background:#8a8a8a;"></div>
<div class="t" style="left:7.9px;top:352.6px;width:12.4px;height:24px;line-height:24px;text-align:center;font-size:19.2px;letter-spacing:1px;text-indent:1px;color:#2a2a3a;transform:rotate(-90deg) scale(0.5);transform-origin:6.2px 12px">8</div>
<div class="r" style="left:11.3px;top:369.6px;width:1.4px;height:1.4px;background:#8a8a8a;"></div>
<div class="r" style="left:10.9px;top:375.3px;width:2.2px;height:1.4px;background:#3a3a3a;"></div>
<div class="r" style="left:11.3px;top:381.0px;width:1.4px;height:1.4px;background:#8a8a8a;"></div>
<div class="t" style="left:7.9px;top:375.4px;width:12.4px;height:24px;line-height:24px;text-align:center;font-size:19.2px;letter-spacing:1px;text-indent:1px;color:#2a2a3a;transform:rotate(-90deg) scale(0.5);transform-origin:6.2px 12px">9</div>
<div class="r" style="left:11.3px;top:392.4px;width:1.4px;height:1.4px;background:#8a8a8a;"></div>
<div class="r" style="left:10.9px;top:398.1px;width:2.2px;height:1.4px;background:#3a3a3a;"></div>
<div class="r" style="left:11.3px;top:403.8px;width:1.4px;height:1.4px;background:#8a8a8a;"></div>
<div class="t" style="left:1.7px;top:398.2px;width:24.8px;height:24px;line-height:24px;text-align:center;font-size:19.2px;letter-spacing:1px;text-indent:1px;color:#2a2a3a;transform:rotate(-90deg) scale(0.5);transform-origin:12.4px 12px">10</div>
<div class="r" style="left:11.3px;top:415.2px;width:1.4px;height:1.4px;background:#8a8a8a;"></div>
<div class="r" style="left:10.9px;top:420.9px;width:2.2px;height:1.4px;background:#3a3a3a;"></div>
<div class="r" style="left:11.3px;top:426.6px;width:1.4px;height:1.4px;background:#8a8a8a;"></div>
<div class="t" style="left:1.7px;top:421.0px;width:24.8px;height:24px;line-height:24px;text-align:center;font-size:19.2px;letter-spacing:1px;text-indent:1px;color:#2a2a3a;transform:rotate(-90deg) scale(0.5);transform-origin:12.4px 12px">11</div>
<div class="r" style="left:11.3px;top:438.0px;width:1.4px;height:1.4px;background:#8a8a8a;"></div>
<div class="r" style="left:10.9px;top:443.7px;width:2.2px;height:1.4px;background:#3a3a3a;"></div>
<div class="r" style="left:11.3px;top:449.4px;width:1.4px;height:1.4px;background:#8a8a8a;"></div>
<div class="t" style="left:1.7px;top:443.8px;width:24.8px;height:24px;line-height:24px;text-align:center;font-size:19.2px;letter-spacing:1px;text-indent:1px;color:#2a2a3a;transform:rotate(-90deg) scale(0.5);transform-origin:12.4px 12px">12</div>
<div class="r" style="left:11.3px;top:460.8px;width:1.4px;height:1.4px;background:#8a8a8a;"></div>
<div class="r" style="left:10.9px;top:466.6px;width:2.2px;height:1.4px;background:#3a3a3a;"></div>
<div class="r" style="left:11.3px;top:472.3px;width:1.4px;height:1.4px;background:#8a8a8a;"></div>
<div class="t" style="left:1.7px;top:466.7px;width:24.8px;height:24px;line-height:24px;text-align:center;font-size:19.2px;letter-spacing:1px;text-indent:1px;color:#2a2a3a;transform:rotate(-90deg) scale(0.5);transform-origin:12.4px 12px">13</div>
<div class="r" style="left:11.3px;top:483.7px;width:1.4px;height:1.4px;background:#8a8a8a;"></div>
<div class="r" style="left:10.9px;top:489.4px;width:2.2px;height:1.4px;background:#3a3a3a;"></div>
<div class="r" style="left:11.3px;top:495.1px;width:1.4px;height:1.4px;background:#8a8a8a;"></div>
<div class="t" style="left:1.7px;top:489.5px;width:24.8px;height:24px;line-height:24px;text-align:center;font-size:19.2px;letter-spacing:1px;text-indent:1px;color:#2a2a3a;transform:rotate(-90deg) scale(0.5);transform-origin:12.4px 12px">14</div>
<div class="r" style="left:11.3px;top:506.5px;width:1.4px;height:1.4px;background:#8a8a8a;"></div>
<div class="r" style="left:10.9px;top:512.2px;width:2.2px;height:1.4px;background:#3a3a3a;"></div>
<div class="r" style="left:11.3px;top:517.9px;width:1.4px;height:1.4px;background:#8a8a8a;"></div>
<div class="t" style="left:1.7px;top:512.3px;width:24.8px;height:24px;line-height:24px;text-align:center;font-size:19.2px;letter-spacing:1px;text-indent:1px;color:#2a2a3a;transform:rotate(-90deg) scale(0.5);transform-origin:12.4px 12px">15</div>
<div class="r" style="left:11.3px;top:529.3px;width:1.4px;height:1.4px;background:#8a8a8a;"></div>
<div class="r" style="left:10.9px;top:535.0px;width:2.2px;height:1.4px;background:#3a3a3a;"></div>
<div class="r" style="left:11.3px;top:540.7px;width:1.4px;height:1.4px;background:#8a8a8a;"></div>
<div class="t" style="left:1.7px;top:535.1px;width:24.8px;height:24px;line-height:24px;text-align:center;font-size:19.2px;letter-spacing:1px;text-indent:1px;color:#2a2a3a;transform:rotate(-90deg) scale(0.5);transform-origin:12.4px 12px">16</div>
<div class="r" style="left:11.3px;top:552.1px;width:1.4px;height:1.4px;background:#8a8a8a;"></div>
<div class="r" style="left:10.9px;top:557.8px;width:2.2px;height:1.4px;background:#3a3a3a;"></div>
<div class="r" style="left:11.3px;top:563.5px;width:1.4px;height:1.4px;background:#8a8a8a;"></div>
<div class="t" style="left:1.7px;top:557.9px;width:24.8px;height:24px;line-height:24px;text-align:center;font-size:19.2px;letter-spacing:1px;text-indent:1px;color:#2a2a3a;transform:rotate(-90deg) scale(0.5);transform-origin:12.4px 12px">17</div>
<div class="r" style="left:11.3px;top:574.9px;width:1.4px;height:1.4px;background:#8a8a8a;"></div>
<div class="r" style="left:22px;top:113px;width:527px;height:484px;background:#ababab;"></div>
<div class="r" style="left:22px;top:113px;width:527px;height:1.5px;background:#3c3c3c;"></div>
<div class="r" style="left:22px;top:113px;width:1.6px;height:484px;background:#3c3c3c;"></div>
<div class="r" style="left:46px;top:136px;width:482px;height:461px;background:#000;"></div>
<div class="r" style="left:46px;top:136px;width:480px;height:461px;background:#454545;"></div>
<div class="r" style="left:47px;top:137px;width:479px;height:460px;background:#fff;"></div>
<div class="r" style="left:92px;top:183px;width:386px;height:420px;border-left:1px solid #c6c6c6;border-top:1px solid #c6c6c6;border-right:1px solid #c6c6c6"></div>
<div class="r" style="left:92px;top:183px;width:1px;height:10px;background:#8a8a8a;"></div>
<div class="r" style="left:549px;top:92px;width:1px;height:505px;background:#fafafa;"></div>
<div class="r" style="left:550px;top:92px;width:12px;height:505px;background:#f0f0f0;"></div>
<svg class="r" style="left:552px;top:97px" width="8" height="5" viewBox="0 0 8 5"><path d="M0.8 4.2l3.2-3.2 3.2 3.2" stroke="#555" stroke-width="1.3" fill="none"/></svg>
<div class="r" style="left:550px;top:106px;width:11px;height:290px;background:#cdcdcd;"></div>
<svg class="r" style="left:552px;top:547px" width="8" height="5" viewBox="0 0 8 5"><path d="M0.8 0.8l3.2 3.2 3.2-3.2" stroke="#555" stroke-width="1.3" fill="none"/></svg>
<div class="r" style="left:550px;top:557px;width:10px;height:10px;background:#e6e6e6;border:1px solid #cfcfcf"></div>
<svg class="r" style="left:550px;top:557px" width="12" height="12" viewBox="0 0 12 12"><path d="M2.5 5.5l3.5-3.5 3.5 3.5zM2.5 9.5l3.5-3.5 3.5 3.5z" fill="#111"/></svg>
<div class="r" style="left:550px;top:570.5px;width:10px;height:10px;background:#e6e6e6;border:1px solid #cfcfcf"></div>
<svg class="r" style="left:550px;top:570.5px" width="12" height="12" viewBox="0 0 12 12"><circle cx="6" cy="6" r="3.3" fill="#5b8dbf" stroke="#3d6894" stroke-width="0.9"/><circle cx="6" cy="6" r="1.7" fill="none" stroke="#9cc4e8" stroke-width="0.8"/></svg>
<div class="r" style="left:550px;top:584px;width:10px;height:10px;background:#e6e6e6;border:1px solid #cfcfcf"></div>
<svg class="r" style="left:550px;top:584px" width="12" height="12" viewBox="0 0 12 12"><path d="M2.5 2.5l3.5 3.5 3.5-3.5zM2.5 6.5l3.5 3.5 3.5-3.5z" fill="#111"/></svg>
<div class="r" style="left:2px;top:597px;width:560px;height:12px;background:#f0f0f0;"></div>
<svg class="r" style="left:6px;top:600px" width="6" height="7" viewBox="0 0 6 7"><path d="M4.8 0.8l-3.3 2.7 3.3 2.7" stroke="#555" stroke-width="1.3" fill="none"/></svg>
<div class="r" style="left:15px;top:597.7px;width:521px;height:10.9px;background:#cdcdcd;"></div>
<svg class="r" style="left:540px;top:600px" width="6" height="7" viewBox="0 0 6 7"><path d="M1.2 0.8l3.3 2.7-3.3 2.7" stroke="#555" stroke-width="1.3" fill="none"/></svg>
<div class="r" style="left:562px;top:92px;width:1px;height:517px;background:#fcfcfc;"></div>
<div class="r" style="left:563px;top:92px;width:5px;height:517px;background:#f0f0f0;"></div>
<div class="r" style="left:565px;top:338px;width:1px;height:1px;background:#666;"></div>
<div class="r" style="left:565px;top:342px;width:1px;height:1px;background:#666;"></div>
<div class="r" style="left:565px;top:345px;width:1px;height:1px;background:#666;"></div>
<div class="r" style="left:565px;top:348px;width:1px;height:1px;background:#666;"></div>
<div class="r" style="left:565px;top:351px;width:1px;height:1px;background:#666;"></div>
<div class="r" style="left:565px;top:354px;width:1px;height:1px;background:#666;"></div>
<div class="r" style="left:565px;top:357px;width:1px;height:1px;background:#666;"></div>
<div class="r" style="left:565px;top:362px;width:1px;height:1px;background:#666;"></div>
<div class="r" style="left:568px;top:92px;width:1px;height:517px;background:#a8a8a8;"></div>
<div class="r" style="left:569px;top:92px;width:28px;height:518px;background:#f0f0f0;"></div>
<div class="r" style="left:597px;top:92px;width:1px;height:518px;background:#c4c4c4;"></div>
<div class="r" style="left:563px;top:609px;width:35px;height:1px;background:#c6c6c6;"></div>
<svg class="r" style="left:580px;top:103px" width="9" height="8" viewBox="0 0 9 8"><rect x="0" y="0" width="6" height="5" fill="#8d949b"/><rect x="0" y="1.5" width="6" height="0.7" fill="#c8ccd0"/><rect x="0" y="3" width="6" height="0.7" fill="#c8ccd0"/><path d="M4 5h5l-2.5 3z" fill="#222"/></svg>
<div class="r" style="left:575px;top:122px;width:18px;height:1px;background:#dcdcdc;"></div>
<div class="r" style="left:571.5px;top:125px;width:22px;height:23px;background:#ececec;border:1px solid #c3c3c3;border-radius:2px"></div>
<svg class="r" style="left:575px;top:128px" width="17" height="19" viewBox="0 0 17 19"><ellipse cx="8.5" cy="17.3" rx="6.5" ry="1.3" fill="#cfcfcf"/><path d="M8 0.3L0 3.8L8 7.3z" fill="#35aef2"/><path d="M8 0.3L16 3.8L8 7.3z" fill="#78d83a"/><path d="M0 3.8L8 7.3V17L0 13.5z" fill="#1890ee"/><path d="M16 3.8L8 7.3V17L16 13.5z" fill="#62cc22"/><path d="M4 10.4L8 12.2V17L4 15.3z" fill="#74dc30"/><path d="M4 5.5V15.3M0 8.6L8 12.2M12 5.5V15.3M8 12.2L16 8.6M4 2L12 5.5M12 2L4 5.5" stroke="#e8f6ff" stroke-width="0.7" fill="none"/></svg>
<svg class="r" style="left:572px;top:152px" width="24" height="24" viewBox="0 0 24 24"><ellipse cx="12" cy="21.3" rx="7" ry="1.3" fill="#d2d2d2"/><path d="M4.5 8.2Q5.5 4.6 9.2 5.2Q10.6 6.2 10 9.2" stroke="#dd7416" stroke-width="2.3" fill="none"/><circle cx="13" cy="5.8" r="2" fill="#c66be0"/><path d="M17.6 3.6l1 2.1 2.3.3-1.7 1.6.4 2.3-2-1.1-2 1.1.4-2.3-1.7-1.6 2.3-.3z" fill="#f2c232"/><circle cx="5" cy="12" r="2" fill="#ec5aa8"/><circle cx="19" cy="12" r="2" fill="#ef5a5a"/><path d="M8.5 8.8L16.8 13.2L6.5 19.8z" fill="#2e86d8"/><path d="M8.5 8.8Q13.5 7.8 16.8 13.2L12.5 14.2Q11.5 11 8.5 8.8z" fill="#163a62"/><path d="M13.5 15Q17.5 13 18.8 15.5Q18.8 19.8 14.5 19.8Q16.5 17.5 13.5 15z" fill="#5cb830"/></svg>
<svg class="r" style="left:572px;top:178px" width="24" height="24" viewBox="0 0 24 24"><ellipse cx="13" cy="22" rx="7" ry="1.3" fill="#d4d4d4"/><path d="M2.3 8.8L14.2 4.8L20.8 13.2L7.6 20z" fill="#fafafa" stroke="#c8c8c8" stroke-width="0.8"/><path d="M3.8 9.2L8 7.8L4.8 10.8z" fill="#7ed43a"/><path d="M6.5 9.3L14 6.8L19 13L9.8 17.8z" fill="#78b8ea"/><path d="M9.8 17.8L8.8 15.5L13 13.5L19 13z" fill="#5ab83a"/><path d="M14 13.5l3-1.8" stroke="#8a5a2a" stroke-width="1"/><path d="M9 14l2.2-2.3 1.8 1.5v2.3l-3 1z" fill="#fff"/><circle cx="11" cy="15.5" r="0.9" fill="#a0601a"/></svg>
<svg class="r" style="left:574px;top:209px" width="19" height="20" viewBox="0 0 19 20"><ellipse cx="9.5" cy="18.8" rx="6" ry="1.1" fill="#d8d8d8"/><circle cx="9.5" cy="9.8" r="7.6" fill="#fafafa" stroke="#f2a21a" stroke-width="2.2"/><path d="M14 5.2L10.3 10.8 8.6 9.2z" fill="#e33a2e"/><path d="M5 14.4L8.6 9.2 10.3 10.8z" fill="#3a8ce0"/><text x="9" y="6.3" font-size="4.2" font-family="Liberation Sans" font-weight="700" text-anchor="middle" fill="#333">N</text></svg>
<div class="r" style="left:0px;top:610px;width:599px;height:18px;background:#f0f0f0;"></div>
<div class="r" style="left:2px;top:610px;width:561px;height:1px;background:#fbfbfb;"></div>
<div class="r" style="left:563px;top:610px;width:35px;height:1px;background:#fbfbfb;"></div>
<div class="t" style="left:8.5px;top:615px;font-size:10.2px;color:#1a1a2a;letter-spacing:-0.6px;font-weight:400;">Страница</div>
<div class="t" style="left:54.5px;top:615px;font-size:10.2px;color:#1a1a2a;letter-spacing:-0.3px;font-weight:400;">1 / 1</div>
<div class="t" style="left:85.8px;top:615px;font-size:10.2px;color:#1a1a2a;letter-spacing:-0.05px;font-weight:400;">Обычный</div>
<div class="t" style="left:142.5px;top:615px;font-size:10.2px;color:#1a1a2a;letter-spacing:-0.05px;font-weight:400;">Русский</div>
<div class="t" style="left:189.5px;top:615px;font-size:10.2px;color:#1a1a2a;letter-spacing:-0.3px;font-weight:400;">ВСТ</div>
<div class="r" style="left:214.5px;top:613px;width:32px;height:15px;overflow:hidden"><div class="t" style="left:0;top:2px;font-size:10.2px;letter-spacing:-0.3px;color:#1a1a2a">СТАНДАРТ</div></div>
<div class="r" style="left:81.5px;top:613px;width:1px;height:14px;background:#b4b4b4;"></div>
<div class="r" style="left:138px;top:613px;width:1px;height:14px;background:#b4b4b4;"></div>
<div class="r" style="left:187px;top:613px;width:1px;height:14px;background:#b4b4b4;"></div>
<div class="r" style="left:214px;top:613px;width:1px;height:14px;background:#b4b4b4;"></div>
<div class="r" style="left:247px;top:613px;width:1px;height:14px;background:#b4b4b4;"></div>
<div class="r" style="left:260px;top:613px;width:1px;height:14px;background:#b4b4b4;"></div>
<div class="r" style="left:282.5px;top:613px;width:1px;height:14px;background:#b4b4b4;"></div>
<div class="r" style="left:396px;top:613px;width:1px;height:14px;background:#b4b4b4;"></div>
<div class="r" style="left:456px;top:613px;width:1px;height:14px;background:#b4b4b4;"></div>
<div class="r" style="left:568px;top:613px;width:1px;height:14px;background:#b4b4b4;"></div>
<svg class="r" style="left:402.5px;top:614.5px" width="8" height="10" viewBox="0 0 8 10"><path d="M0.5 0.5h4.5l2.5 2.5v6.5h-7z" fill="#eef0f2" stroke="#98a4b0"/><path d="M5 0.5v2.5h2.5" fill="none" stroke="#98a4b0" stroke-width="0.7"/></svg>
<svg class="r" style="left:414px;top:614.5px" width="16" height="10" viewBox="0 0 16 10"><path d="M0.5 0.5h4.5l2.5 2.5v6.5h-7z" fill="#b4cdea" stroke="#3f70ae"/><path d="M8.5 0.5h4.5l2.5 2.5v6.5h-7z" fill="#b4cdea" stroke="#3f70ae"/><path d="M5 0.5v2.5h2.5M13 0.5v2.5h2.5" fill="none" stroke="#3f70ae" stroke-width="0.7"/></svg>
<svg class="r" style="left:434px;top:614.5px" width="14" height="10" viewBox="0 0 14 10"><path d="M0.5 2.5l2-2h4.5v9h-6.5z" fill="#f2f2f2" stroke="#98a4b0"/><path d="M7 0.5h4.5l2 2v7h-6.5z" fill="#f2f2f2" stroke="#98a4b0"/></svg>
<svg class="r" style="left:459px;top:614px" width="11" height="11" viewBox="0 0 11 11"><circle cx="5.5" cy="5.5" r="4.7" fill="#dbe6f0" stroke="#5a7ea6" stroke-width="1.1"/><rect x="3" y="5" width="5" height="1.2" fill="#2d4f78"/></svg>
<div class="r" style="left:473px;top:619px;width:77px;height:1px;background:#a0a0a0;"></div>
<div class="r" style="left:482px;top:616px;width:1px;height:7px;background:#a0a0a0;"></div>
<div class="r" style="left:487px;top:616px;width:1px;height:7px;background:#a0a0a0;"></div>
<div class="r" style="left:511px;top:616px;width:1px;height:7px;background:#a0a0a0;"></div>
<svg class="r" style="left:495px;top:614px" width="10" height="11" viewBox="0 0 10 11"><circle cx="5" cy="5.5" r="3.4" fill="#5f84a8" stroke="#3c5d80" stroke-width="1"/><circle cx="5" cy="4.6" r="1.5" fill="#8fb0cf"/></svg>
<svg class="r" style="left:552px;top:614px" width="11" height="11" viewBox="0 0 11 11"><circle cx="5.5" cy="5.5" r="4.7" fill="#dbe6f0" stroke="#5a7ea6" stroke-width="1.1"/><rect x="3" y="5" width="5" height="1.2" fill="#2d4f78"/><rect x="5" y="3" width="1.2" height="5" fill="#2d4f78"/></svg>
<div class="t" style="left:571.5px;top:615px;font-size:10.2px;color:#1a1a2a;letter-spacing:-0.4px;font-weight:400;">77 %</div>
<div class="r" style="left:0px;top:0px;width:600px;height:1px;background:#5aa5e0;"></div>
<div class="r" style="left:0px;top:0px;width:1px;height:628px;background:#4898da;"></div>
<div class="r" style="left:599px;top:0px;width:1px;height:628px;background:#2a8ade;"></div>
<div class="r" style="left:598px;top:92px;width:1px;height:518px;background:#dcd6d0;"></div>
<div class="r" style="left:1px;top:92px;width:1px;height:518px;background:#8c8782;"></div>
</body></html>
